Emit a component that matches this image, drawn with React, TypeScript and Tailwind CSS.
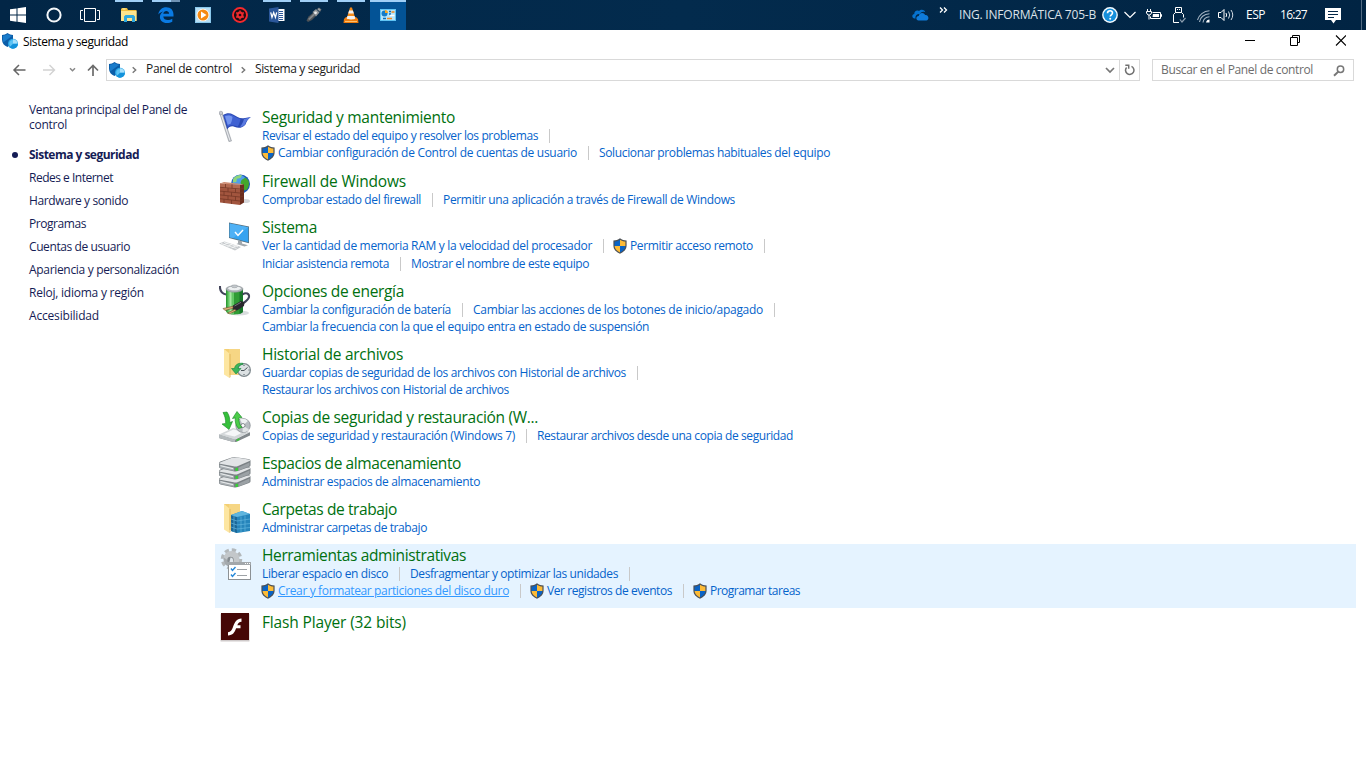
import { useLayoutEffect, useRef, type ReactNode } from "react";

/** Single-line label whose tracking is adjusted so it fills exactly `w` pixels. */
function Fit({ w, children, className = "" }: { w: number; children: string; className?: string }) {
  const ref = useRef<HTMLSpanElement>(null);
  useLayoutEffect(() => {
    const el = ref.current;
    if (!el) return;
    el.style.letterSpacing = "0px";
    const natural = el.getBoundingClientRect().width;
    el.style.letterSpacing = `${(w - natural) / children.length}px`;
  }, [w, children]);
  return (
    <span className="block shrink-0 whitespace-nowrap" style={{ width: w }}>
      <span ref={ref} className={`inline-block ${className}`}>{children}</span>
    </span>
  );
}

function Shield() {
  return (
    <svg className="-ml-px mr-[3px] shrink-0" width="14" height="16" viewBox="0 0 14 16">
      <path d="M7 .3C5 1.9 3 2.4.4 2.5v5C.4 11.300 3 14 7 15.700c4-1.700 6.600-4.400 6.600-8.200v-5C11 2.400 9 1.900 7 .3z" fill="#4a4f55" />
      <path d="M7 1.700C5.300 2.900 3.600 3.400 1.600 3.600V8H7z" fill="#0a63c4" />
      <path d="M7 1.700c1.700 1.200 3.400 1.700 5.400 1.900V8H7z" fill="#fdbb36" />
      <path d="M1.600 8c.2 3 2.200 5 5.400 6.400V8z" fill="#fdbb36" />
      <path d="M12.400 8c-.2 3-2.200 5-5.400 6.400V8z" fill="#0a63c4" />
    </svg>
  );
}

function PanelShield() {
  return (
    <svg width="16" height="16" viewBox="0 0 16 16" className="shrink-0">
      <path d="M5.500 0C4 1.300 2 1.900 0 2v4.500c0 3.600 2.200 6.300 5.500 7.500l4-3L11 6.500V2C9 1.900 7 1.300 5.500 0z" fill="#0b5da8" />
      <path d="M5.500 1C4 2.200 2.500 2.600.9 2.800v3.700c0 1 .2 2 .6 2.800L10 3V2.800C8.500 2.600 7 2.200 5.500 1z" fill="#1a7ccb" />
      <circle cx="11" cy="10.800" r="5" fill="#2aa6e6" />
      <circle cx="11" cy="10.800" r="3.700" fill="#5cc3f5" />
      <path d="M11 10.800V6.300a4.500 4.500 0 0 1 4.500 4.500z" fill="#a7e0fb" />
      <path d="M11 10.800h4.900a5 5 0 0 1-8.400 3.500z" fill="#1292db" />
    </svg>
  );
}

const box = { width: 32, height: 32, viewBox: "0 0 32 32" };

const FlagIcon = () => (
  <svg {...box}>
    <path d="M.8 3.500l2.300-.8L12.500 31l-2.600.6z" fill="#b9bdc3" stroke="#858b93" strokeWidth=".5" />
    <path d="M2.100 4l8.900 26.500" stroke="#f2f3f5" strokeWidth=".9" />
    <circle cx="1.900" cy="3" r="1.800" fill="#c7cad0" stroke="#868b94" strokeWidth=".5" />
    <path d="M4 5c3.500-2 7-2.200 10-.5 3.500 2 6 4 10.500 3.700L32 7c-3 2-4.300 4-5.500 7.500-3 3.700-7.500 4-10.500 2.500-3-1.400-6-.4-7.800 2.500z" fill="#2a49b4" />
    <path d="M5 5.500c3-1.700 6.500-1.700 9 0 3 1.800 5 3.200 7.500 3.500-.6 3-1.300 5-2.700 7.500-3-.6-6-2.500-10 .5z" fill="#4062d2" />
    <path d="M6 6.300c3-1.300 5.500-1 7.500.7-.3 3-1 5-2 7-1.300 0-2 .5-2.700 1z" fill="#7394ee" />
    <path d="M25 8.900L31 7.600c-2.500 1.900-4 4-5 6.800-1.300 1.700-3 2.300-5 2.300 2-2.500 3.300-5 4-7.800z" fill="#5a7ae0" />
  </svg>
);

const FirewallIcon = () => (
  <svg {...box}>
    <ellipse cx="26" cy="27" rx="5" ry="2" fill="#d5d7db" />
    <circle cx="21.500" cy="10" r="9.500" fill="#1d58b8" />
    <circle cx="20.500" cy="8" r="7" fill="#4f9eea" />
    <path d="M14 5c2-3 6-4.500 9-4l-1.500 3-3.500.8L17.300 8l-3.300.5z" fill="#8fd67a" />
    <path d="M22.500 6l4-2.500 3 3c1 3 .4 6.500-1.500 9l-2.500 1L24 12.500 21.500 9z" fill="#44a72c" />
    <path d="M21 11l4-.8v18.300L21 31z" fill="#6b2d1e" />
    <path d="M1 9.500l20 1.500v20L1 28.500z" fill="#a2553e" />
    <path d="M1 9.500l20 1.500v5L1 14z" fill="#b26a51" />
    <path d="M1 9.500L5 8l20 2.200-4 .8z" fill="#cd8b71" />
    <path d="M1 13.300l20 1.700 4-.8M1 17.100l20 1.900 4-1M1 20.900l20 2.100 4-1.200M1 24.700l20 2.300 4-1.400M6.500 10v3.700M13 10.500v3.800M9 14v3.800M16.500 14.700v3.800M5 17.600v3.700M12.500 18.300v3.800M9 21.800v3.700M16.500 22.600v3.700M5 25.300V29M12.500 26v4" stroke="#753726" strokeWidth=".8" fill="none" />
  </svg>
);

const SystemIcon = () => (
  <svg {...box}>
    <path d="M10 2.500l20 4v16.800l-20-5.300z" fill="#55707f" />
    <path d="M10.700 3.400l18.600 3.800v15L10.700 17.300z" fill="#36a3f0" />
    <path d="M10.700 3.400l18.600 3.800L14 18l-3.300-.7z" fill="#4fb1f5" />
    <path d="M16 12l3 3.500 5-5.500" fill="none" stroke="#fff" strokeWidth="1.400" />
    <path d="M19 20.300l4 1v2.200l6 1.700-3.500 1.400-8-2.600 1.500-.8z" fill="#a3a9ae" />
    <path d="M0 23.500l5.500-2L22 27l-6 3.500z" fill="#c6cacd" />
    <path d="M2 23.500l15.500 5M5 22.300l14 4.500M4.500 25l5-2.500M8.500 26.500l5-2.500M12.500 28l5-2.500" stroke="#f6f7f8" strokeWidth=".8" />
  </svg>
);

const PowerIcon = () => (
  <svg {...box}>
    <ellipse cx="20" cy="29" rx="10" ry="2.500" fill="#d9dcde" />
    <path d="M1 2c-.3 4 1.500 7.500 6 8.500" fill="none" stroke="#42445a" strokeWidth="2.100" />
    <path d="M7 5v22c0 4.500 17 4.500 17 0V5z" fill="#2f9c35" />
    <path d="M8.500 6v23.300c2 1 4 1.200 6.500 1.200V6z" fill="#64c866" />
    <path d="M10.500 7v22.800c1 .3 1.500.3 2 .3V7z" fill="#a6e8a2" />
    <path d="M20.500 6v24c2.800-.8 3.500-1.800 3.500-3V5z" fill="#17782a" />
    <ellipse cx="15.500" cy="5" rx="8.500" ry="3.200" fill="#aeb4b8" stroke="#8b9195" strokeWidth=".6" />
    <ellipse cx="15.500" cy="4.300" rx="6.500" ry="2" fill="#edf0f1" />
    <ellipse cx="15.500" cy="2.300" rx="3.200" ry="1.400" fill="#c3c8cc" stroke="#8d9296" strokeWidth=".5" />
    <path d="M23.500 10.500c3.500-2.500 7-1 6.500 2.500-.7 3-3 4.500-6.500 6.500" fill="none" stroke="#42445a" strokeWidth="2.100" />
    <path d="M14 21.500l8-4.500 3.500 1.500-.5 3.500-7 4.500-4.500-1z" fill="#29282d" />
    <path d="M15.500 22l6.500-3.700" stroke="#77767c" strokeWidth="1" />
    <path d="M4 24.500l10-2.200v2L6 26.500zM8.500 29l7.500-3.700 1 1.500-6.500 3z" fill="#dcb37a" stroke="#6c4b2b" strokeWidth=".6" />
  </svg>
);

const Folder = () => (
  <>
    <path d="M5 2h16v26H7z" fill="#f3cf74" />
    <path d="M10 2h11v26H10z" fill="#f6d684" />
    <path d="M5 2l5.500 4.500V31L5 27.500z" fill="#fde6a1" />
    <path d="M10.500 6.500l1 .8V30l-1 1z" fill="#dfb65a" />
  </>
);

const HistoryIcon = () => (
  <svg {...box}>
    <Folder />
    <circle cx="25" cy="23" r="7" fill="#7f898e" />
    <circle cx="25" cy="23" r="5.800" fill="#dce1e3" />
    <path d="M25 23.500l3.500-3M25 23.500h-3M25 18v1M25 27v1M29.500 23h1" stroke="#4c565c" strokeWidth="1" />
    <path d="M24 16.300c-5-.6-8 1.500-8.500 5.200H12.500L17 27l5-5.500h-3c.3-2.300 2-4 5-4.200z" fill="#3cb65a" stroke="#14843a" strokeWidth=".6" />
  </svg>
);

const BackupIcon = () => (
  <svg {...box}>
    <path d="M0 24.500l16 5 15-7.500v3.500l-15 7-16-4.500z" fill="#83898d" />
    <path d="M0 24.500L14 18l17 4-15 7.500z" fill="#d3d7d9" />
    <path d="M0 24.500l16 5v3L0 28z" fill="#b4babd" />
    <path d="M5 24l9.500-4.500 10 2.500-9 4.500z" fill="#f6f7f8" />
    <ellipse cx="24" cy="15.500" rx="7.300" ry="7" fill="#b6bcc0" stroke="#7c8286" strokeWidth=".6" />
    <path d="M24 15.500l-3-6.200c3-1 6-.3 7.800 1.700z" fill="#eef1f2" />
    <path d="M24 15.500l6 4c-2 2.500-4.500 3-6.500 2.500z" fill="#e2e5e6" />
    <circle cx="24" cy="15.500" r="2" fill="#fff" stroke="#6f757a" strokeWidth=".8" />
    <path d="M4 2.500L8 2c2.500 3.500 3 7 2.700 10.500l2.800-1-3.500 8L3 14l3.700-.6C6.700 9.500 6 6 4 2.500z" fill="#35c03a" stroke="#128522" strokeWidth=".6" />
    <path d="M13.500 8.500L18 1.500l5 6-3 .3c-.3 4 .5 7 3 9.700l-3.500 1c-3-3.500-3.600-7-3.200-10.600z" fill="#4ccc49" stroke="#128522" strokeWidth=".6" />
    <path d="M17.500 29.500l3-1.500v2l-3 1.500z" fill="#3bc739" />
  </svg>
);

const Disk = ({ y }: { y: number }) => (
  <g transform={`translate(0 ${y})`}>
    <path d="M0 6c0-1 1-1.300 2-1.800L12 .7c2-.7 3-.7 5-.4L29 2c2 .4 2.500 1 2.500 2v4c0 1-.5 1.500-1.500 2l-11 4c-1.500.6-3 .6-4.500.2L1.500 11.500C.5 11 0 10.500 0 9.500z" fill="#7b8185" />
    <path d="M.5 5.800L13 .8c2-.5 3-.5 5-.2l12.500 2.200c.8.300.8.900 0 1.300L19 9c-1.500.6-3 .7-4.500.3L1 6.700c-.7-.2-.8-.6-.5-.9z" fill="#e2e4e6" />
    <path d="M.5 7.500L15 10.800v3L1.500 11c-.8-.3-1-.8-1-1.500z" fill="#a9afb3" />
    <path d="M19.500 10.500l11-5V8c0 .8-.3 1.200-1 1.500l-10 4z" fill="#9ba1a5" />
    <path d="M1.500 8.700l12.500 3" stroke="#eceeef" strokeWidth="1" />
    <path d="M16.500 11l2.500-.3v3l-2.500.3z" fill="#35cf35" />
  </g>
);

const StorageIcon = () => (
  <svg {...box}>
    <Disk y={17} />
    <Disk y={9} />
    <Disk y={1} />
  </svg>
);

const WorkFolderIcon = () => (
  <svg {...box}>
    <Folder />
    <path d="M12 13l11-4 8 3v17l-13 2-6-2z" fill="#2685bb" />
    <path d="M12 13l6 2v16l-6-2z" fill="#1a6899" />
    <path d="M12 13l11-4 8 3-13 3z" fill="#5fb5de" />
    <path d="M18 19l13-2M18 23l13-1.500M18 27l13-1.500M22 14.500v16M26 13.500v16M12 17l6 2M12 21l6 2M12 25l6 2M15 14v16" stroke="#62b4dc" strokeWidth=".7" />
  </svg>
);

const AdminIcon = () => (
  <svg {...box}>
    <circle cx="11.500" cy="11" r="9" fill="none" stroke="#b3b8bb" strokeWidth="3.500" strokeDasharray="4.200 2.869" />
    <circle cx="11.500" cy="11" r="8" fill="#c3c7ca" />
    <path d="M3.700 9.500a8 8 0 0 0 5.500 9.200l1-4.700z" fill="#a4a9ad" />
    <circle cx="10.500" cy="12" r="3.200" fill="#858b8f" />
    <path d="M10.500 9.500a2.500 2.500 0 0 1 2.500 2.500v2H9.500z" fill="#dfe6ec" />
    <rect x="8.500" y="14.500" width="22" height="17" fill="#fff" stroke="#8c9195" />
    <path d="M8 14h23v3H8z" fill="#a2a7ab" />
    <path d="M25 15.500h1M27 15.500h1M29 15.500h1" stroke="#fff" />
    <path d="M17 21.500h10M17 27.500h10" stroke="#9da2a6" />
    <path d="M11 20.500l1.500 2L15.500 19M11 26.500l1.500 2 3-3.500" fill="none" stroke="#2688d9" strokeWidth="1.400" />
  </svg>
);

const FlashIcon = () => (
  <svg {...box}>
    <rect x="1.500" y="2" width="29" height="27.500" rx=".5" fill="#cfcaca" />
    <rect x="2" y="1" width="28" height="27" fill="#450706" />
    <path d="M22.500 6.500v3.300c-2.300.1-3.300 1.300-4.200 3.500h3.200v3h-4.400c-1.500 4.300-3.300 7-8.100 7.200v-3.300c2.700-.2 3.700-1.700 5-5.100C15.700 10.300 17.500 6.600 22.500 6.500z" fill="#fff" />
  </svg>
);

type Link = { t: string; w: number; shield?: boolean; hover?: boolean };
type Group = { title: string; w: number; h: string; icon: () => ReactNode; second?: string; rows: { links: Link[]; end?: boolean }[]; active?: boolean };

const groups: Group[] = [
  { title: "Seguridad y mantenimiento", w: 193, h: "h-16", icon: FlagIcon, rows: [
    { links: [{ t: "Revisar el estado del equipo y resolver los problemas", w: 276 }], end: true },
    { links: [{ t: "Cambiar configuración de Control de cuentas de usuario", w: 299, shield: true }, { t: "Solucionar problemas habituales del equipo", w: 231 }] } ] },
  { title: "Firewall de Windows", w: 144, h: "h-[46px]", icon: FirewallIcon, rows: [
    { links: [{ t: "Comprobar estado del firewall", w: 159 }, { t: "Permitir una aplicación a través de Firewall de Windows", w: 292 }] } ] },
  { title: "Sistema", w: 55, h: "h-16", icon: SystemIcon, second: "mt-0.5", rows: [
    { links: [{ t: "Ver la cantidad de memoria RAM y la velocidad del procesador", w: 330 }, { t: "Permitir acceso remoto", w: 123, shield: true }], end: true },
    { links: [{ t: "Iniciar asistencia remota", w: 127 }, { t: "Mostrar el nombre de este equipo", w: 178 }] } ] },
  { title: "Opciones de energía", w: 142, h: "h-[63px]", icon: PowerIcon, rows: [
    { links: [{ t: "Cambiar la configuración de batería", w: 189 }, { t: "Cambiar las acciones de los botones de inicio/apagado", w: 290 }], end: true },
    { links: [{ t: "Cambiar la frecuencia con la que el equipo entra en estado de suspensión", w: 387 }] } ] },
  { title: "Historial de archivos", w: 141, h: "h-[63px]", icon: HistoryIcon, rows: [
    { links: [{ t: "Guardar copias de seguridad de los archivos con Historial de archivos", w: 364 }], end: true },
    { links: [{ t: "Restaurar los archivos con Historial de archivos", w: 247 }] } ] },
  { title: "Copias de seguridad y restauración (W...", w: 276, h: "h-[46px]", icon: BackupIcon, rows: [
    { links: [{ t: "Copias de seguridad y restauración (Windows 7)", w: 253 }, { t: "Restaurar archivos desde una copia de seguridad", w: 256 }] } ] },
  { title: "Espacios de almacenamiento", w: 199, h: "h-[46px]", icon: StorageIcon, rows: [
    { links: [{ t: "Administrar espacios de almacenamiento", w: 218 }] } ] },
  { title: "Carpetas de trabajo", w: 135, h: "h-[46px]", icon: WorkFolderIcon, rows: [
    { links: [{ t: "Administrar carpetas de trabajo", w: 165 }] } ] },
  { title: "Herramientas administrativas", w: 204, h: "h-16", icon: AdminIcon, active: true, rows: [
    { links: [{ t: "Liberar espacio en disco", w: 126 }, { t: "Desfragmentar y optimizar las unidades", w: 208 }], end: true },
    { links: [{ t: "Crear y formatear particiones del disco duro", w: 231, shield: true, hover: true }, { t: "Ver registros de eventos", w: 125, shield: true }, { t: "Programar tareas", w: 90, shield: true }] } ] },
  { title: "Flash Player (32 bits)", w: 144, h: "h-[46px]", icon: FlashIcon, rows: [] },
];

const Sep = () => <span className="mb-px ml-[11px] mr-[10px] h-3.5 w-px shrink-0 bg-[#c9c9c9]" />;

function GroupView({ g }: { g: Group }) {
  const Icon = g.icon;
  return (
    <section className={`flex ${g.h} ${g.active ? "bg-[#e5f3ff]" : ""}`}>
      <div className={`w-8 shrink-0 pt-1 ${g.active ? "ml-[5px] mr-2.5" : "ml-1 mr-[11px]"}`}><Icon /></div>
      <div>
        <h2 className={`flex h-[22px] items-center text-[15.5px] leading-[22px] text-[#00700f] ${g.rows.length ? "" : "mt-[3px]"}`}><Fit w={g.w}>{g.title}</Fit></h2>
        {g.rows.map((r, i) => (
          <div key={i} className={`flex h-4 items-center text-xs leading-4 text-[#0563cb] ${i ? g.second ?? "mt-px" : ""}`}>
            {r.links.map((l, j) => (
              <div key={j} className="flex items-center">
                {j > 0 && <Sep />}
                {l.shield && <Shield />}
                <Fit w={l.w} className={l.hover ? "text-[#3399ff] underline" : ""}>{l.t}</Fit>
              </div>
            ))}
            {r.end && <Sep />}
          </div>
        ))}
      </div>
    </section>
  );
}

const nav: [string, number][] = [
  ["Redes e Internet", 84], ["Hardware y sonido", 99], ["Programas", 57], ["Cuentas de usuario", 101],
  ["Apariencia y personalización", 150], ["Reloj, idioma y región", 115], ["Accesibilidad", 70],
];

const s16 = { width: 16, height: 16, viewBox: "0 0 16 16" };

const apps: { icon: ReactNode; bar?: "one" | "two"; active?: boolean }[] = [
  { bar: "one", icon: (
    <svg {...s16}><path d="M0 2l1-1h5l1 2h8.500v11H0z" fill="#efbd3d" /><path d="M0 4h15.500v10H0z" fill="#fde48c" /><path d="M1.500 2h3" stroke="#fff4c2" /><path d="M3 15V9.500L4.500 8h8L14 9.500V15h-3v-4H6v4z" fill="#2da8df" /></svg>) },
  { bar: "two", icon: (
    <svg {...s16}><path d="M.3 7.500C1 3 4 .3 8.300.3c4.600 0 7.200 3.200 7.200 7.200v2H5.300c.2 4 5.700 4.300 9 2.200v3c-1.500.8-3.200 1.300-5.400 1.300-4.300 0-7-2.600-7-6 0-2.600 1.400-4.500 3.400-5.500C3 5 1.300 6 .3 7.500zM5.300 6.800h5.800c0-3.500-5.300-3.900-5.800 0z" fill="#0a7ae2" fillRule="evenodd" /></svg>) },
  { icon: (
    <svg {...s16}><path d="M0 0h16v16H0z" fill="#8ac8ec" /><path d="M1 1h14v14H1z" fill="#b8def3" /><circle cx="8" cy="8" r="6.300" fill="#fff" /><circle cx="8" cy="8" r="5.500" fill="#f58a12" /><path d="M6 4.500L11.500 8 6 11.500z" fill="#fff" /></svg>) },
  { icon: (
    <svg {...s16}><circle cx="8" cy="8" r="7" fill="#1a0d13" stroke="#f5292d" strokeWidth="1.900" /><circle cx="8" cy="8" r="2.500" fill="none" stroke="#ed2a2f" strokeWidth="2" /><path d="M8 3.500v9M4.100 5.700l7.800 4.600M4.100 10.300l7.800-4.600" stroke="#ed2a2f" strokeWidth="1.500" /><circle cx="8" cy="8" r="1.300" fill="#1a0d13" /></svg>) },
  { bar: "one", icon: (
    <svg {...s16}><path d="M8 2h7.500v12H8z" fill="#fff" /><path d="M10 4.500h4M10 6.500h4M10 8.500h4M10 10.500h4M10 12.500h4" stroke="#2b579a" /><path d="M0 1.500L9.500 0v16L0 14.500z" fill="#2b579a" /><path d="M1.700 5.300l1.300 5L4.700 5.600l1.700 4.700 1.300-5" fill="none" stroke="#fff" strokeWidth="1.300" /></svg>) },
  { bar: "one", icon: (
    <svg {...s16}><path d="M.5 13.500l2-4L8 5l3 3-5 5-4 2z" fill="#4b5156" /><path d="M2 12l5.500-5.500L9 8l-5.500 5z" fill="#80868a" /><path d="M6.500 5L10 2l3.500 3.500-3.500 4z" fill="#8f9498" /><path d="M11 2l2-1.500 2.500 2L14 5z" fill="#686e73" /><path d="M11.500 2.300l1.500-1 1.500 1.300-1 1.400z" fill="#9ea3a6" /><circle cx="9.500" cy="5.800" r="1.400" fill="#e9ebec" /></svg>) },
  { bar: "one", icon: (
    <svg {...s16}><path d="M1 12l2-2h10l2 2 .5 4H.5z" fill="#ef7b0c" /><path d="M3.500 12L7 .5h2L12.500 12c-2 1.500-7 1.500-9 0z" fill="#f58a18" /><path d="M6.100 3.500h3.800l1 3H5.200zM4.400 9h7.200l.7 2.500c-2 1.200-6.500 1.200-8.600 0z" fill="#f2f2f2" /><path d="M2 14.500h12" stroke="#ffc069" /></svg>) },
  { active: true, bar: "one", icon: (
    <svg {...s16}><path d="M0 2h16v12H0z" fill="#5fc3f3" /><path d="M1 3h14v10H1z" fill="#b5e5fb" /><circle cx="4.500" cy="6.500" r="3" fill="#147cc8" /><path d="M5 6V3a3 3 0 0 1 3 3z" fill="#f6a623" /><path d="M9 4.500h2M9 7h2M3 11.500h3" stroke="#0e6fb9" strokeWidth="1.300" /><path d="M11.500 5h3M7 11.500h5" stroke="#f28b22" strokeWidth="1.600" /><path d="M10 8.500h4.500" stroke="#fff" strokeWidth="1.500" /></svg>) },
];

function Taskbar() {
  return (
    <header className="flex h-[30px] items-center bg-gradient-to-r from-[#022646] via-[#032b4d] to-[#012443] text-xs text-white">
      <div className="flex w-9 justify-center">
        <svg {...s16}><path d="M0 2.300L6.500 1.400V7.500H0zM7.500 1.200L16 0v7.500H7.500zM0 8.500h6.500v6.200L0 13.800zM7.500 8.500H16V16l-8.500-1.200z" fill="#fff" /></svg>
      </div>
      <div className="flex w-9 justify-center"><svg {...s16}><circle cx="8" cy="8" r="6.600" fill="none" stroke="#f4f7fa" strokeWidth="2" /></svg></div>
      <div className="mr-[3px] flex w-9 justify-center">
        <svg width="20" height="14" viewBox="0 0 20 14"><path d="M4.500.5h11v13h-11zM3 2.500H.5v9H3M17 2.500h2.500v9H17" fill="none" stroke="#fff" /></svg>
      </div>
      <div className="flex h-full gap-px">
        {apps.map((a, i) => (
          <div key={i} className={`flex h-full w-9 flex-col items-center ${a.active ? "bg-[#035396]" : ""}`}>
            <div className={`flex h-0.5 ${a.active ? "w-9" : "w-7"}`}>
              {a.bar && <span className="h-full flex-1 bg-[#a0cff6]" />}
              {a.bar === "two" && <span className="h-full w-[9px] bg-[#7092b2]" />}
            </div>
            <div className="pt-[5px]">{a.icon}</div>
          </div>
        ))}
      </div>
      <svg className="ml-[506px]" width="17" height="12" viewBox="0 0 17 12"><path d="M3.500 9.500H2.700C-.5 9-.3 5.300 2.300 5.100 2 2.500 4.500.6 7 2c2-2.400 6-1.300 6.300 1.300C10.500 2 8.500 3.500 7.800 5 5 4.600 3 6.500 3.500 9.500z" fill="#0672ce" /><path d="M6.500 11.500c-2.800-.2-3-4.200.3-4.600.3-3.600 5.300-4 6.300-.8 3.700-.6 4.600 5 1.200 5.400z" fill="#0f7cdb" /></svg>
      <svg className="mb-2.5 ml-2.5 shrink-0" width="9" height="6" viewBox="0 0 9 6"><path d="M1 .5L3.500 3 1 5.500M5 .5L7.500 3 5 5.500" fill="none" stroke="#fff" strokeWidth="1.300" /></svg>
      <div className="ml-[11px] text-[#dbe2e9]"><Fit w={137}>ING. INFORMÁTICA 705-B</Fit></div>
      <svg {...s16} className="ml-[6px] shrink-0"><circle cx="8" cy="8" r="7.900" fill="#f5fbff" /><circle cx="8" cy="8" r="6.500" fill="#158fdb" /><path d="M5.500 6.300C5.600 3 10.700 3.100 10.500 6c-.1 1.800-2.300 1.800-2.300 3.600" fill="none" stroke="#fff" strokeWidth="1.600" /><circle cx="8.200" cy="11.800" r="1" fill="#fff" /></svg>
      <svg className="ml-1.5 shrink-0" width="12" height="8" viewBox="0 0 12 8"><path d="M.5 1L6 6.500 11.500 1" fill="none" stroke="#fff" strokeWidth="1.200" /></svg>
      <svg className="ml-2.5 shrink-0" width="16" height="12" viewBox="0 0 16 12"><path d="M6.500 3.500h8v6h-10V7.500M14.500 5.500h1v2h-1" fill="none" stroke="#fff" /><path d="M7 5h6v3H6.500z" fill="#fff" /><path d="M1.500 0v2.500M4.500 0v2.500" stroke="#fff" /><path d="M.5 2.500h5v1.500L4 6H2L.5 4z" fill="none" stroke="#fff" /><path d="M3 6v4.500" stroke="#fff" /></svg>
      <svg className="ml-[11px] shrink-0" width="13" height="16" viewBox="0 0 13 16"><path d="M2.500 5.500v-5h6v5M.5 15.500v-8l2-2h6l2 2v3M.5 15.500H6M4 2.500h1M6 2.500h1" fill="none" stroke="#fff" /><path d="M7 12.500l2 2.500 3.500-4" fill="none" stroke="#8c9eaf" strokeWidth="1.200" /></svg>
      <svg className="ml-[11px] mt-0.5 shrink-0" width="14" height="13" viewBox="0 0 14 13"><path d="M.5 10C2 5 6.500 1 12.500.8M2.500 12C3 7.500 7 4 12.500 3.800M6 12.500c.5-3.500 3-5.500 6.500-5.700" fill="none" stroke="#a5b5c4" strokeWidth="1.100" /><path d="M9 12.500c.3-2 1.700-3 3.500-3v3z" fill="#fff" /></svg>
      <svg className="ml-[7px] shrink-0" width="17" height="14" viewBox="0 0 17 14"><path d="M.5 4.500h2.500l3-3v11l-3-3H.5zM8 5q1.200 2 0 4" fill="none" stroke="#fff" /><path d="M10.500 3.500q2.500 3.500 0 7M13 2q3.500 5 0 10" fill="none" stroke="#d5dde4" /></svg>
      <div className="ml-[11px]"><Fit w={19}>ESP</Fit></div>
      <div className="ml-[15px]"><Fit w={27}>16:27</Fit></div>
      <svg className="ml-[18px] mt-0.5 shrink-0" width="16" height="16" viewBox="0 0 16 16"><path d="M0 0h16v12h-5l-2.500 3.500L6 12H0z" fill="#fff" /><path d="M3 3.500h10M3 6.500h10M3 9.500h6" stroke="#042747" /></svg>
      <div className="ml-5 h-full w-px bg-[#526b83]" />
    </header>
  );
}

function AddressRow() {
  return (
    <div className="flex h-[22px] text-xs text-[#1b1b1b]">
      <svg className="ml-3 mt-1 shrink-0" width="94" height="14" viewBox="0 0 94 14" fill="none">
        <path d="M13.500 7H2M7 2L2 7l5 5" stroke="#666" strokeWidth="1.500" />
        <path d="M31 7h11.500M37.500 2l5 5-5 5" stroke="#d2d2d2" strokeWidth="1.400" />
        <path d="M58 5.300l2.500 2.500L63 5.300" stroke="#888" strokeWidth="1.500" />
        <path d="M81 13V2.500M76 7.500l5-5 5 5" stroke="#6b6b6b" strokeWidth="1.700" />
      </svg>
      <div className="flex w-[1034px] items-center border border-[#d9d9d9]">
        <div className="mb-px ml-[2px]"><PanelShield /></div>
        <svg className="ml-[7px] mr-[9px] shrink-0" width="5" height="8" viewBox="0 0 5 8"><path d="M.7 1.200L3.700 4 .7 6.800" fill="none" stroke="#777" strokeWidth="1.400" /></svg>
        <Fit w={86} className="-translate-y-px">Panel de control</Fit>
        <svg className="ml-[9px] mr-[9px] shrink-0" width="5" height="8" viewBox="0 0 5 8"><path d="M.7 1.200L3.700 4 .7 6.800" fill="none" stroke="#777" strokeWidth="1.400" /></svg>
        <Fit w={105} className="-translate-y-px">Sistema y seguridad</Fit>
        <svg className="ml-auto mr-1 mt-px" width="10" height="7" viewBox="0 0 10 7"><path d="M1 1l4 4 4-4" fill="none" stroke="#777" strokeWidth="1.700" /></svg>
        <div className="flex h-full w-5 items-center justify-center border-l border-[#d9d9d9]">
          <svg width="11" height="12" viewBox="0 0 11 12"><path d="M7.500 2.400A4.200 4.200 0 1 1 2.600 3.400" fill="none" stroke="#707070" strokeWidth="1.500" /><path d="M1.300 1.300h3.400v3.500" fill="none" stroke="#707070" strokeWidth="1.500" /></svg>
        </div>
      </div>
      <div className="ml-3 flex w-[202px] items-center border border-[#d9d9d9] pl-2 text-[#6d6d6d]">
        <Fit w={152}>Buscar en el Panel de control</Fit>
        <svg className="ml-5 mt-px shrink-0" width="12" height="12" viewBox="0 0 12 12"><circle cx="7.500" cy="4.300" r="3.200" fill="none" stroke="#777" strokeWidth="1.500" /><path d="M5.200 6.700L1 10.700" stroke="#777" strokeWidth="1.900" /></svg>
      </div>
    </div>
  );
}

export default function App() {
  return (
    <div className="flex h-[768px] w-[1366px] flex-col overflow-hidden bg-white font-['Open_Sans','Noto_Sans',sans-serif]">
      <Taskbar />
      <div className="flex h-[29px] items-start pl-0.5">
        <div className="pt-[3px]"><PanelShield /></div>
        <div className="ml-[5px] pt-[4px] text-xs leading-4 text-black"><Fit w={105}>Sistema y seguridad</Fit></div>
        <svg className="ml-auto mr-5 mt-[5px]" width="101" height="11" viewBox="0 0 101 11" fill="none" stroke="#000"><path d="M0 5.500h10M45.500 2.500h7v8h-7zM47.500 2.500v-2h7v7h-2" /><path d="M91 .5l10 10M101 .5l-10 10" strokeWidth="1.100" /></svg>
      </div>
      <AddressRow />
      <div className="flex flex-1">
        <aside className="w-[215px] shrink-0 pl-[29px] pt-[21px] text-xs text-[#151c55]">
          <div className="leading-[15px]"><Fit w={158}>Ventana principal del Panel de</Fit><Fit w={38}>control</Fit></div>
          <div className="mt-[11px] flex h-[23px] items-center font-bold leading-[23px]">
            <span className="-ml-[17px] mr-[11px] h-1.5 w-1.5 rounded-full bg-[#151c55]" />
            <Fit w={110}>Sistema y seguridad</Fit>
          </div>
          {nav.map(([t, w]) => <div key={t} className="h-[23px] leading-[23px]"><Fit w={w}>{t}</Fit></div>)}
        </aside>
        <main className="w-[1141px] pt-[25px]">
          {groups.map((g) => <GroupView key={g.title} g={g} />)}
        </main>
      </div>
    </div>
  );
}
